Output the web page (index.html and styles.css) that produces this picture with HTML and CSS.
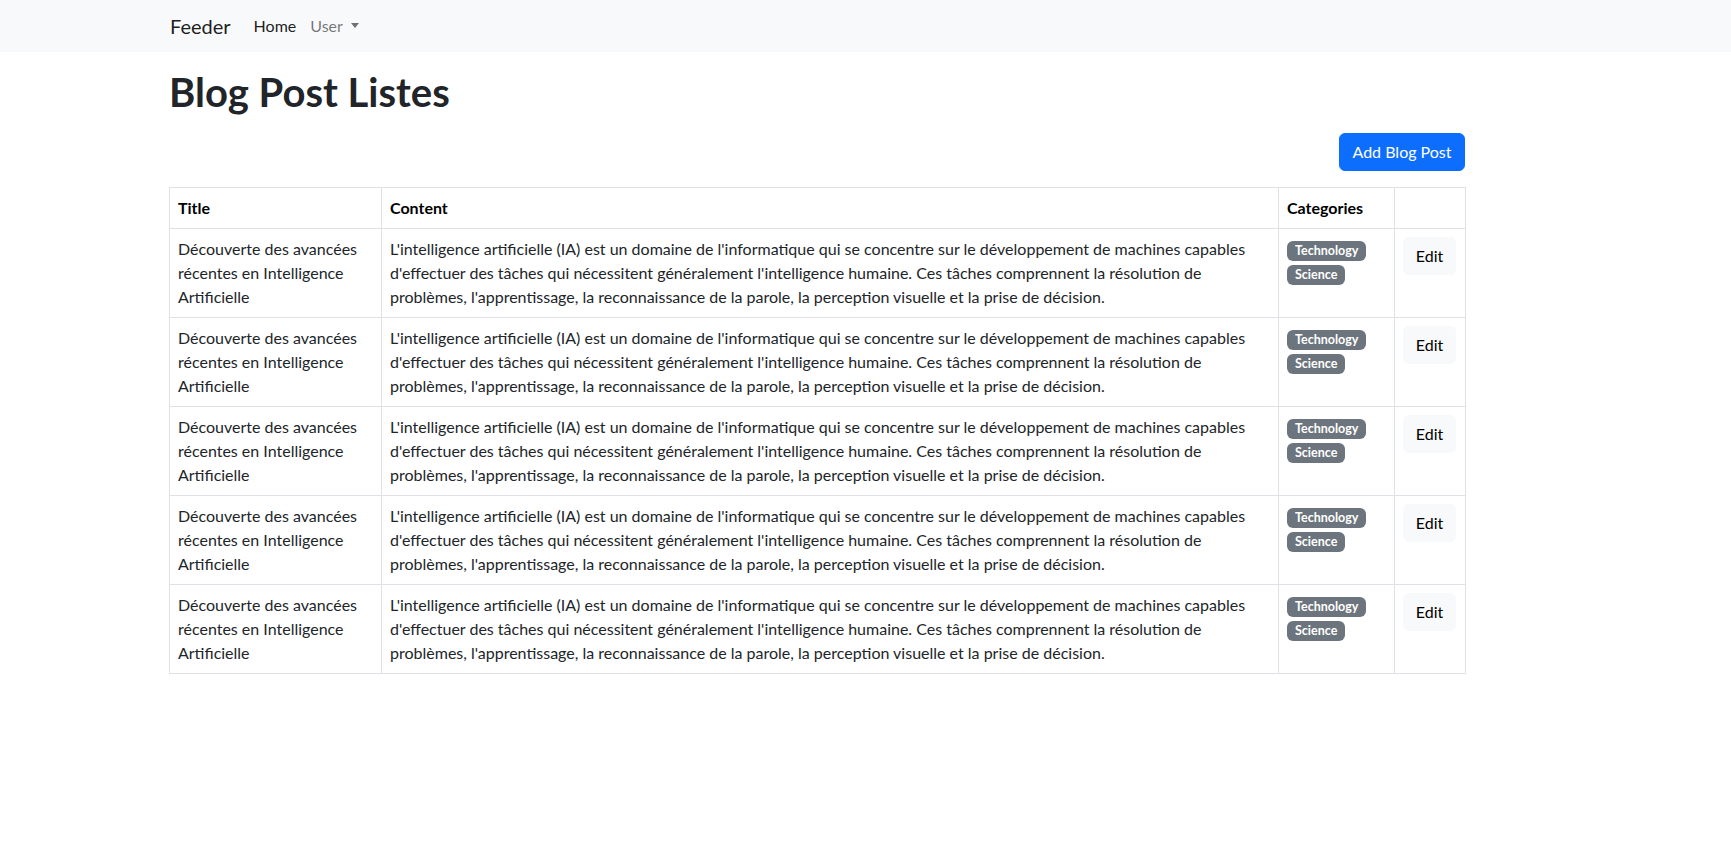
FILE: index.html
```html
<!DOCTYPE html>
<html lang="fr">
<head>
<meta charset="utf-8">
<title>Feeder</title>
<link rel="stylesheet" href="styles.css">
</head>
<body>
<nav class="navbar">
  <div class="container nav-inner">
    <a class="brand" href="#">Feeder</a>
    <ul class="nav">
      <li><a class="nav-link active" href="#">Home</a></li>
      <li><a class="nav-link dropdown" href="#">User<span class="caret"></span></a></li>
    </ul>
  </div>
</nav>
<main class="container">
  <h1 class="page-title">Blog Post Listes</h1>
  <div class="actions">
    <a class="btn btn-primary" href="#">Add Blog Post</a>
  </div>
  <table class="table">
    <colgroup>
      <col class="c-title"><col class="c-content"><col class="c-cat"><col class="c-edit">
    </colgroup>
    <thead>
      <tr><th>Title</th><th>Content</th><th>Categories</th><th></th></tr>
    </thead>
    <tbody>
      <tr>
        <td>Découverte des avancées récentes en Intelligence Artificielle</td>
        <td>L'intelligence artificielle (IA) est un domaine de l'informatique qui se concentre sur le développement de machines capables d'effectuer des tâches qui nécessitent généralement l'intelligence humaine. Ces tâches comprennent la résolution de problèmes, l'apprentissage, la reconnaissance de la parole, la perception visuelle et la prise de décision.</td>
        <td><span class="badge">Technology</span> <span class="badge">Science</span></td>
        <td><a class="btn btn-light" href="#">Edit</a></td>
      </tr>
      <tr>
        <td>Découverte des avancées récentes en Intelligence Artificielle</td>
        <td>L'intelligence artificielle (IA) est un domaine de l'informatique qui se concentre sur le développement de machines capables d'effectuer des tâches qui nécessitent généralement l'intelligence humaine. Ces tâches comprennent la résolution de problèmes, l'apprentissage, la reconnaissance de la parole, la perception visuelle et la prise de décision.</td>
        <td><span class="badge">Technology</span> <span class="badge">Science</span></td>
        <td><a class="btn btn-light" href="#">Edit</a></td>
      </tr>
      <tr>
        <td>Découverte des avancées récentes en Intelligence Artificielle</td>
        <td>L'intelligence artificielle (IA) est un domaine de l'informatique qui se concentre sur le développement de machines capables d'effectuer des tâches qui nécessitent généralement l'intelligence humaine. Ces tâches comprennent la résolution de problèmes, l'apprentissage, la reconnaissance de la parole, la perception visuelle et la prise de décision.</td>
        <td><span class="badge">Technology</span> <span class="badge">Science</span></td>
        <td><a class="btn btn-light" href="#">Edit</a></td>
      </tr>
      <tr>
        <td>Découverte des avancées récentes en Intelligence Artificielle</td>
        <td>L'intelligence artificielle (IA) est un domaine de l'informatique qui se concentre sur le développement de machines capables d'effectuer des tâches qui nécessitent généralement l'intelligence humaine. Ces tâches comprennent la résolution de problèmes, l'apprentissage, la reconnaissance de la parole, la perception visuelle et la prise de décision.</td>
        <td><span class="badge">Technology</span> <span class="badge">Science</span></td>
        <td><a class="btn btn-light" href="#">Edit</a></td>
      </tr>
      <tr>
        <td>Découverte des avancées récentes en Intelligence Artificielle</td>
        <td>L'intelligence artificielle (IA) est un domaine de l'informatique qui se concentre sur le développement de machines capables d'effectuer des tâches qui nécessitent généralement l'intelligence humaine. Ces tâches comprennent la résolution de problèmes, l'apprentissage, la reconnaissance de la parole, la perception visuelle et la prise de décision.</td>
        <td><span class="badge">Technology</span> <span class="badge">Science</span></td>
        <td><a class="btn btn-light" href="#">Edit</a></td>
      </tr>
    </tbody>
  </table>
</main>
</body>
</html>
```
FILE: styles.css
```css
* { box-sizing: border-box; }
html, body { margin: 0; padding: 0; }
body {
  font-family: "Lato", "Open Sans", sans-serif;
  font-size: 16px;
  line-height: 1.5;
  color: #212529;
  background: #fff;
}
a { text-decoration: none; }

.container {
  width: 1320px;
  padding: 0 12px;
  margin-left: 157px;
}

.navbar {
  background: #f8f9fa;
  height: 52px;
}
.nav-inner {
  display: flex;
  align-items: center;
  height: 51px;
}
.brand {
  font-size: 20px;
  line-height: 30px;
  color: rgba(0,0,0,.9);
  margin-right: 16px;
  margin-left: 1px;
}
.nav {
  display: flex;
  list-style: none;
  margin: 0;
  padding: 0;
}
.nav-link {
  display: block;
  padding: 8px 7px;
  color: rgba(0,0,0,.55);
  font-size: 16px;
  line-height: 24px;
}
.nav-link.active { color: rgba(0,0,0,.9); }
.caret {
  display: inline-block;
  margin-left: 8px;
  vertical-align: 4px;
  border-top: 5px solid;
  border-right: 4.5px solid transparent;
  border-left: 4.5px solid transparent;
  border-bottom: 0;
}

.page-title {
  font-size: 40px;
  font-weight: 700;
  line-height: 48px;
  margin: 16px 0 17px;
  color: #212529;
}

.actions {
  display: flex;
  justify-content: flex-end;
  margin-bottom: 16px;
}
.btn {
  display: inline-block;
  padding: 6px 12px;
  font-size: 16px;
  line-height: 24px;
  border: 1px solid transparent;
  border-radius: 6px;
  text-align: center;
}
.btn-primary {
  background: #0d6efd;
  border-color: #0d6efd;
  color: #fff;
  width: 126px;
}
.btn-light {
  background: #f8f9fa;
  border-color: #f8f9fa;
  color: #000;
  width: 53px;
  padding-left: 0;
  padding-right: 0;
}

.table {
  width: 1296px;
  border-collapse: collapse;
  table-layout: fixed;
  margin-bottom: 16px;
}
.c-title { width: 212px; }
.c-content { width: 897px; }
.c-cat { width: 116px; }
.c-edit { width: 71px; }
.table th, .table td {
  border: 1px solid #dee2e6;
  padding: 8px;
  vertical-align: top;
  text-align: left;
}
.table th { font-weight: 700; color: #000; }
.table td { color: #212529; }

.badge {
  display: inline-block;
  padding: 4px 8px;
  font-size: 12.5px;
  font-weight: 700;
  line-height: 12px;
  color: #fff;
  background: #6c757d;
  border-radius: 6px;
  white-space: nowrap;
  vertical-align: baseline;
}
```
